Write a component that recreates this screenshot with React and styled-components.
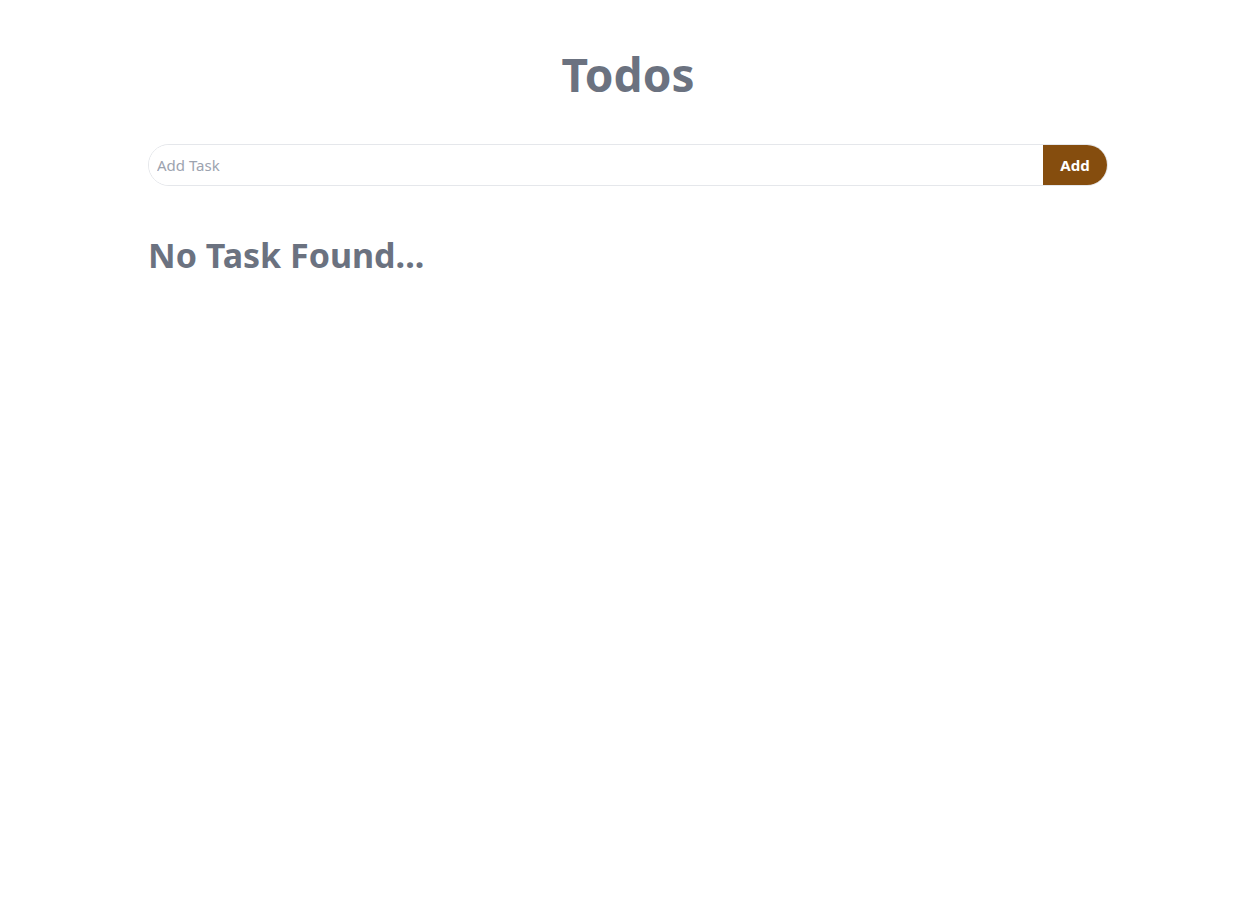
import styled, { createGlobalStyle } from 'styled-components'

const GlobalStyle = createGlobalStyle`
  body {
    margin: 0;
    background: #ffffff;
    font-family: "Noto Sans", "Open Sans", sans-serif;
  }
`

const Page = styled.main`
  width: 960px;
  margin: 0 0 0 calc(50% - 476px);
  padding-top: 42px;
`

const Title = styled.h1`
  margin: 0;
  text-align: center;
  font-size: 46px;
  line-height: 64px;
  font-weight: 700;
  color: #6b7280;
`

const Form = styled.form`
  display: flex;
  margin-top: 38px;
  height: 42px;
  border: 1px solid #e5e7eb;
  border-radius: 999px;
  overflow: hidden;
  box-sizing: border-box;
`

const TaskInput = styled.input`
  flex: 1;
  border: none;
  outline: none;
  padding: 0 8px;
  font-family: inherit;
  font-size: 15px;
  color: #374151;
  &::placeholder {
    color: #9ca3af;
  }
`

const AddButton = styled.button`
  width: 64px;
  border: none;
  background: #854d0e;
  color: #ffffff;
  font-family: inherit;
  font-size: 15px;
  font-weight: 700;
  cursor: pointer;
`

const Empty = styled.h2`
  margin: 47px 0 0;
  font-size: 34px;
  line-height: 44px;
  font-weight: 700;
  color: #6b7280;
`

const App = () => {
  return (
    <>
      <GlobalStyle />
      <Page>
        <Title>Todos</Title>
        <Form onSubmit={(e) => e.preventDefault()}>
          <TaskInput placeholder="Add Task" />
          <AddButton type="submit">Add</AddButton>
        </Form>
        <Empty>No Task Found...</Empty>
      </Page>
    </>
  )
}

export default App
